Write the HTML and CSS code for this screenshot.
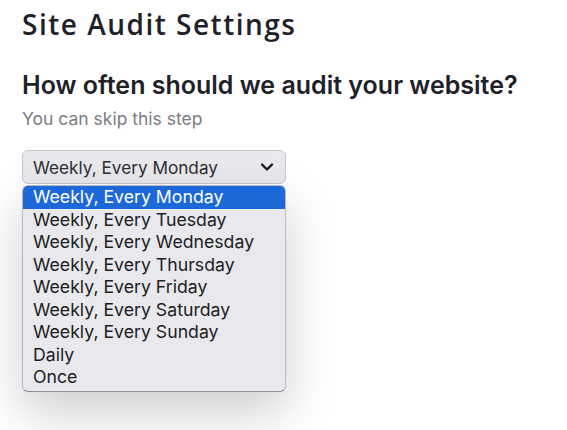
FILE: index.html
```html
<!DOCTYPE html>
<html>
<head>
<meta charset="utf-8">
<link rel="stylesheet" href="styles.css">
</head>
<body>
<div class="page">
  <h1 class="title">Site Audit Settings</h1>
  <h2 class="question">How often should we audit your website?</h2>
  <p class="hint">You can skip this step</p>
  <div class="picker">
    <div class="select">
      <span>Weekly, Every Monday</span>
      <svg class="chev" width="14" height="10" viewBox="0 0 14 10"><path d="M2 2.5 L7 7.5 L12 2.5" fill="none" stroke="#1c1c1c" stroke-width="2.4" stroke-linecap="round" stroke-linejoin="round"/></svg>
    </div>
    <ul class="menu">
      <li class="active">Weekly, Every Monday</li>
      <li>Weekly, Every Tuesday</li>
      <li>Weekly, Every Wednesday</li>
      <li>Weekly, Every Thursday</li>
      <li>Weekly, Every Friday</li>
      <li>Weekly, Every Saturday</li>
      <li>Weekly, Every Sunday</li>
      <li>Daily</li>
      <li>Once</li>
    </ul>
  </div>
</div>
</body>
</html>
```

FILE: styles.css
```css
html, body {
  margin: 0;
  padding: 0;
  background: #ffffff;
}
body {
  min-height: 430px;
}
.page {
  box-sizing: border-box;
  min-height: 430px;
  padding: 6px 22px;
  font-family: "Inter", "Liberation Sans", sans-serif;
  color: #1f2129;
}
.title {
  margin: 0;
  font-family: "Open Sans", "Lato", sans-serif;
  font-weight: 600;
  font-size: 28px;
  letter-spacing: 1.5px;
  line-height: 36px;
  color: #1f2129;
}
.question {
  margin: 28px 0 0;
  font-size: 25px;
  font-weight: 600;
  line-height: 30px;
  color: #1f2129;
}
.hint {
  margin: 8px 0 0;
  font-size: 17.5px;
  line-height: 22px;
  color: #7b7d85;
}
.picker {
  margin-top: 20px;
  width: 264px;
}
.select {
  box-sizing: border-box;
  height: 34px;
  display: flex;
  align-items: center;
  justify-content: space-between;
  padding: 0 11px 0 10px;
  background: #e9e9ed;
  border: 1px solid #c5c5cb;
  border-radius: 6px;
  font-size: 17.2px;
  color: #2d2d33;
}
.chev {
  display: block;
}
.menu {
  list-style: none;
  margin: 1px 0 0;
  padding: 0 0 2px;
  box-sizing: border-box;
  width: 264px;
  background: #e9e9ed;
  border: 1px solid #b9b9bf;
  border-bottom-color: #8e8e93;
  border-radius: 6px;
  overflow: hidden;
  box-shadow: 0 20px 50px rgba(0,0,0,0.2);
  font-size: 17.7px;
  color: #1c1c24;
}
.menu li {
  height: 22.5px;
  line-height: 22.5px;
  padding-left: 10px;
  white-space: nowrap;
}
.menu li.active {
  background: #1c68d8;
  color: #ffffff;
}
```
